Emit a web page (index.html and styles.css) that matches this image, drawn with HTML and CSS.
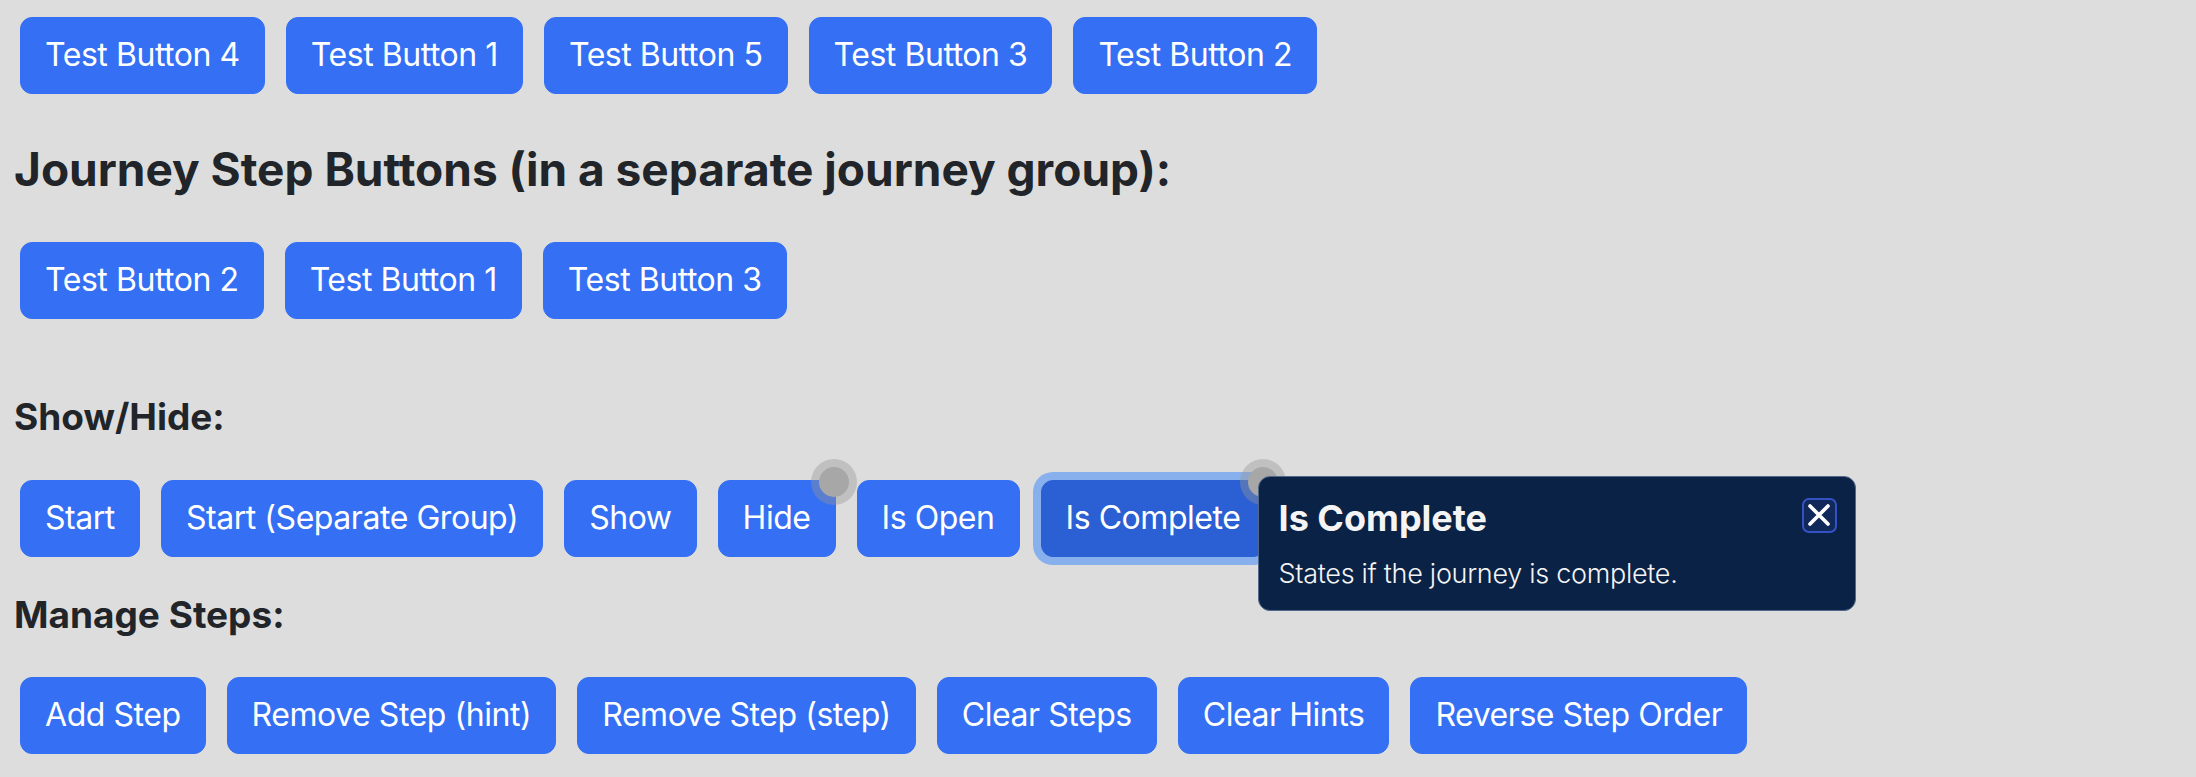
FILE: index.html
```html
<!DOCTYPE html>
<html lang="en">
<head>
    <meta charset="UTF-8">
    <meta name="viewport" content="width=device-width, initial-scale=1.0">
    <title>Journey Test Page</title>
    <link rel="stylesheet" href="styles.css">
</head>
<body>
    <div class="btn-row">
        <button class="btn">Test Button 4</button>
        <button class="btn">Test Button 1</button>
        <button class="btn">Test Button 5</button>
        <button class="btn">Test Button 3</button>
        <button class="btn">Test Button 2</button>
    </div>

    <h2 class="section-title">Journey Step Buttons (in a separate journey group):</h2>
    <div class="btn-row">
        <button class="btn">Test Button 2</button>
        <button class="btn">Test Button 1</button>
        <button class="btn">Test Button 3</button>
    </div>

    <h3 class="group-title first">Show/Hide:</h3>
    <div class="btn-row">
        <button class="btn">Start</button>
        <button class="btn">Start (Separate Group)</button>
        <button class="btn">Show</button>
        <button class="btn">Hide<span class="beacon"></span></button>
        <button class="btn">Is Open</button>
        <div class="hint-anchor">
            <button class="btn focused">Is Complete<span class="beacon"></span></button>
            <div class="hint">
                <div class="hint-head">
                    <span class="hint-title">Is Complete</span>
                    <button class="hint-close" aria-label="Close">
                        <svg width="22" height="22" viewBox="0 0 22 22">
                            <path d="M2 2 L20 20 M20 2 L2 20" stroke="#fff" stroke-width="3.6" stroke-linecap="round"/>
                        </svg>
                    </button>
                </div>
                <p class="hint-text">States if the journey is complete.</p>
            </div>
        </div>
    </div>

    <h3 class="group-title last">Manage Steps:</h3>
    <div class="btn-row">
        <button class="btn">Add Step</button>
        <button class="btn">Remove Step (hint)</button>
        <button class="btn">Remove Step (step)</button>
        <button class="btn">Clear Steps</button>
        <button class="btn">Clear Hints</button>
        <button class="btn">Reverse Step Order</button>
    </div>
</body>
</html>
```

FILE: styles.css
```css
body {
    font-family: Inter, "Noto Sans", sans-serif;
    background-color: #dddddd;
    color: #212529;
    margin: 0;
    padding: 17px 20px;
}
.btn-row {
    display: flex;
    gap: 21px;
    align-items: flex-start;
}
.btn {
    position: relative;
    font-family: inherit;
    font-size: 32px;
    letter-spacing: -0.45px;
    line-height: 48px;
    color: #fff;
    background-color: #346ff4;
    border: 1px solid #346ff4;
    border-radius: 12px;
    padding: 13px 24px 14px;
    cursor: pointer;
}
.btn.focused {
    background-color: #2b5fd4;
    border-color: #2b5fd4;
    box-shadow: 0 0 0 8px rgba(49, 132, 253, 0.5);
}
.beacon {
    position: absolute;
    top: -22px;
    right: -22px;
    width: 46px;
    height: 46px;
    border-radius: 50%;
    background-color: rgba(150, 150, 150, 0.4);
    z-index: 1;
}
.beacon::after {
    content: "";
    position: absolute;
    left: 8px;
    top: 8px;
    width: 30px;
    height: 30px;
    border-radius: 50%;
    background-color: #a7a7a7;
}
.section-title {
    font-size: 46px;
    font-weight: 700;
    margin: 48px 0 45px -6px;
    line-height: 1.2;
}
.group-title {
    font-size: 37px;
    font-weight: 700;
    margin: 36px 0 40px -6px;
    line-height: 1.2;
}
.group-title.first {
    margin-top: 76px;
}
.group-title.last {
    margin-bottom: 40px;
}
.hint-anchor {
    position: relative;
}
.hint {
    position: absolute;
    left: 217px;
    top: -4px;
    width: 556px;
    padding: 17px 20px 18px;
    background-color: #0a2245;
    border: 1px solid #51688a;
    border-radius: 12px;
    color: #f4f4f4;
    z-index: 2;
}
.hint-head {
    display: flex;
    justify-content: space-between;
    align-items: flex-start;
}
.hint-title {
    font-size: 36px;
    font-weight: 700;
    line-height: 48px;
}
.hint-close {
    width: 35px;
    height: 35px;
    margin-top: 4px;
    margin-right: -2px;
    padding: 0;
    display: flex;
    align-items: center;
    justify-content: center;
    background-color: #10295a;
    border: 2px solid #3552c4;
    border-radius: 7px;
}
.hint-text {
    margin: 13px 0 0;
    font-size: 27px;
    letter-spacing: -0.3px;
    font-weight: 300;
    line-height: 1.4;
}
```
